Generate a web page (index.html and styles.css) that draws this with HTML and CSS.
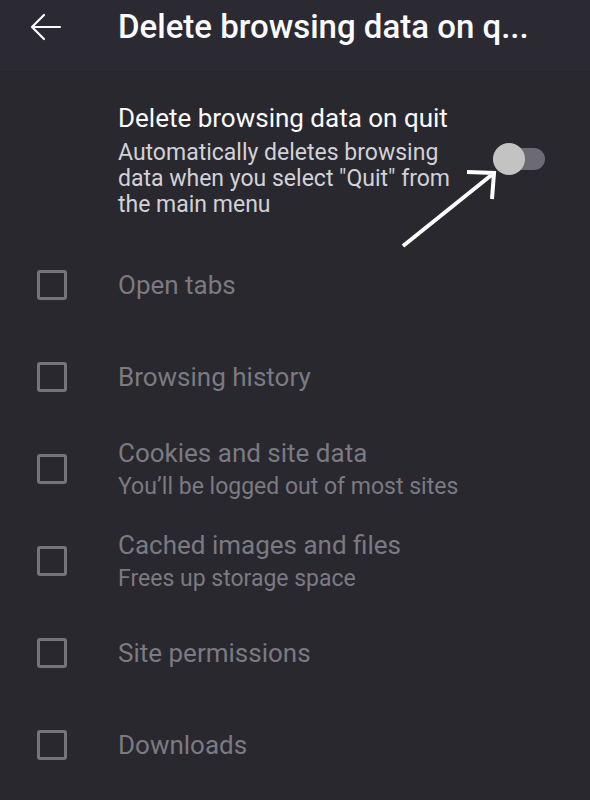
FILE: index.html
```html
<!DOCTYPE html>
<html lang="en">
<head>
<meta charset="utf-8">
<title>Delete browsing data on quit</title>
<link rel="stylesheet" href="styles.css">
</head>
<body>
<div class="screen">
  <header class="appbar">
    <svg class="back" width="32" height="28" viewBox="0 0 32 28" aria-hidden="true">
      <path d="M30 14H3M14 2L2 14l12 12" fill="none" stroke="#fbfbfe" stroke-width="2.2" stroke-linecap="round" stroke-linejoin="round"/>
    </svg>
    <h1 class="title">Delete browsing data on q...</h1>
  </header>
  <main class="content">
    <section class="quit">
      <div class="quit-text">
        <div class="quit-title">Delete browsing data on quit</div>
        <div class="quit-sub">Automatically deletes browsing data when you select "Quit" from the main menu</div>
      </div>
      <div class="switch"><span class="thumb"></span></div>
      <svg class="pointer" width="110" height="96" viewBox="0 0 110 96" aria-hidden="true">
        <path d="M8 84L99 11M72 10L99 11L97 37" fill="none" stroke="#ffffff" stroke-width="4" stroke-linecap="butt" stroke-linejoin="miter"/>
      </svg>
    </section>
    <ul class="list">
      <li class="row"><span class="box"></span><div class="label">Open tabs</div></li>
      <li class="row"><span class="box"></span><div class="label">Browsing history</div></li>
      <li class="row"><span class="box"></span><div class="label">Cookies and site data<div class="sub">You’ll be logged out of most sites</div></div></li>
      <li class="row"><span class="box"></span><div class="label">Cached images and files<div class="sub">Frees up storage space</div></div></li>
      <li class="row"><span class="box"></span><div class="label">Site permissions</div></li>
      <li class="row"><span class="box"></span><div class="label">Downloads</div></li>
    </ul>
  </main>
</div>
</body>
</html>
```
FILE: styles.css
```css
html, body {
  margin: 0;
  padding: 0;
  background: #29282f;
}
body {
  font-family: Roboto, "Noto Sans", "Liberation Sans", sans-serif;
  width: 590px;
  height: 800px;
  overflow: hidden;
}
.screen {
  display: flex;
  flex-direction: column;
}
.appbar {
  height: 71px;
  display: flex;
  align-items: center;
  background: #2b2a33;
  border-bottom: 1px solid #26252c;
  box-sizing: content-box;
}
.back {
  margin-left: 30px;
  margin-top: -18px;
  flex: none;
}
.title {
  margin: 0 0 0 56px;
  margin-top: -18px;
  font-size: 33px;
  font-weight: 500;
  color: #fbfbfe;
  white-space: nowrap;
}
.content {
  display: flex;
  flex-direction: column;
}
.quit {
  position: relative;
  height: 167px;
  display: flex;
  padding-left: 118px;
  box-sizing: border-box;
}
.quit-text {
  width: 345px;
  padding-top: 31px;
}
.quit-title {
  font-size: 26px;
  color: #fbfbfe;
  line-height: 30px;
}
.quit-sub {
  margin-top: 7px;
  font-size: 23px;
  line-height: 26px;
  color: #d2d1d7;
}
.switch {
  position: relative;
  margin-top: 76px;
  margin-left: 30px;
  width: 52px;
  height: 22px;
  border-radius: 11px;
  background: #6c6b73;
  flex: none;
}
.thumb {
  position: absolute;
  left: 0;
  top: -5px;
  width: 32px;
  height: 32px;
  border-radius: 50%;
  background: #c4c3c4;
}
.pointer {
  position: absolute;
  left: 395px;
  top: 90px;
}
.list {
  list-style: none;
  margin: 0;
  padding: 0;
}
.row {
  height: 92px;
  display: flex;
  align-items: center;
}
.box {
  width: 24px;
  height: 24px;
  border: 3px solid #75747b;
  border-radius: 3px;
  margin-left: 37px;
  margin-right: 51px;
  flex: none;
}
.label {
  font-size: 26px;
  line-height: 34px;
  color: #7b7a82;
}
.sub {
  margin-top: 2px;
  font-size: 23px;
  line-height: 30px;
  color: #7b7a82;
}
```
